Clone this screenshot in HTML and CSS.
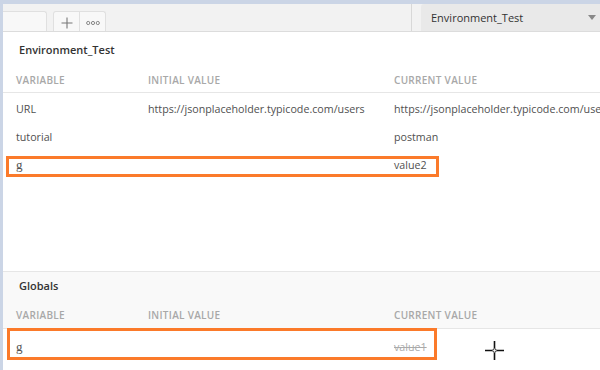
FILE: index.html
```html
<!DOCTYPE html>
<html>
<head>
<meta charset="UTF-8">
<title>Environment_Test</title>
<link rel="stylesheet" href="styles.css">
</head>
<body>
<div class="frame">
  <div class="top-strip"></div>
  <div class="toolbar">
    <div class="tab"></div>
    <div class="tab-actions">
      <span class="tab-btn">
        <svg width="12" height="12" viewBox="0 0 12 12"><path d="M6 0.5V11.5M0.5 6H11.5" stroke="#777" stroke-width="1.1" fill="none"/></svg>
      </span>
      <span class="tab-btn">
        <svg width="14" height="6" viewBox="0 0 14 6"><circle cx="2.2" cy="3" r="1.6" stroke="#888" fill="none"/><circle cx="7" cy="3" r="1.6" stroke="#888" fill="none"/><circle cx="11.8" cy="3" r="1.6" stroke="#888" fill="none"/></svg>
      </span>
    </div>
    <div class="toolbar-space"></div>
    <div class="env-select">
      <span>Environment_Test</span>
      <svg width="8" height="5" viewBox="0 0 8 5"><path d="M0 0H8L4 5Z" fill="#888"/></svg>
    </div>
  </div>

  <div class="panel">
    <div class="section">
      <div class="section-title">Environment_Test</div>
      <div class="var-row head">
        <span>Variable</span><span>Initial value</span><span>Current value</span>
      </div>
      <div class="var-row">
        <span>URL</span><span>https://jsonplaceholder.typicode.com/users</span><span>https://jsonplaceholder.typicode.com/users</span>
      </div>
      <div class="var-row">
        <span>tutorial</span><span></span><span>postman</span>
      </div>
      <div class="var-row">
        <span class="edit">g</span><span></span><span>value2</span>
      </div>
    </div>

    <div class="section globals">
      <div class="section-title">Globals</div>
      <div class="var-row head">
        <span>Variable</span><span>Initial value</span><span>Current value</span>
      </div>
      <div class="var-row first">
        <span class="edit">g</span><span></span><span class="old">value1</span>
      </div>
    </div>

    <div class="mark mark-env"></div>
    <div class="mark mark-global"></div>
    <svg class="cursor" width="21" height="21" viewBox="0 0 21 21">
      <path d="M10.5 1V8M10.5 13V20M1 10.5H8M13 10.5H20" stroke="#111" stroke-width="1.6"/>
      <circle cx="10.5" cy="10.5" r="1.8" stroke="#111" fill="#fff" stroke-width="1"/>
    </svg>
  </div>
</div>
</body>
</html>
```

FILE: styles.css
```css
body {
  margin: 0;
  font-family: "Open Sans", Arial, sans-serif;
  color: #505050;
  background-color: #fff;
}

.frame {
  width: 600px;
  height: 370px;
  overflow: hidden;
  border-left: 3px solid #cbd5e6;
  box-sizing: border-box;
  position: relative;
}

.top-strip {
  height: 4px;
  background-color: #cbd5e6;
}

.toolbar {
  display: flex;
  align-items: flex-end;
  height: 27px;
  background-color: #f2f2f2;
  border-bottom: 1px solid #dcdcdc;
}

.tab {
  width: 43px;
  height: 19px;
  background-color: #f8f8f8;
  border: 1px solid #e0e0e0;
  border-left: none;
  border-bottom: none;
  border-radius: 0 3px 0 0;
}

.tab-actions {
  display: flex;
  margin-left: 6px;
  height: 19px;
  border: 1px solid #e0e0e0;
  border-bottom: none;
  border-radius: 3px 3px 0 0;
  background-color: #f8f8f8;
}

.tab-btn {
  width: 25px;
  display: flex;
  align-items: center;
  justify-content: center;
  padding-top: 2px;
}

.tab-btn + .tab-btn {
  border-left: 1px solid #e0e0e0;
}

.toolbar-space {
  flex: 1;
  align-self: stretch;
  border-right: 1px solid #d8d8d8;
  margin-right: 9px;
}

.env-select {
  align-self: stretch;
  width: 165px;
  display: flex;
  align-items: center;
  justify-content: space-between;
  padding: 0 4px 0 10px;
  background-color: #e9e9e9;
  border-radius: 3px 0 0 0;
  font-size: 11px;
  color: #333;
}

.panel {
  position: relative;
}

.section {
  height: 239px;
}

.section.globals {
  height: auto;
  border-top: 1px solid #e6e6e6;
}

.section-title {
  padding: 10px 0 0 16px;
  height: 24px;
  font-size: 11px;
  font-weight: 600;
  color: #333;
}

.globals .section-title {
  background-color: #f9f9f9;
  height: 22px;
  padding-top: 6px;
}

.var-row {
  display: grid;
  grid-template-columns: 132px 246px 1fr;
  padding: 3px 0 0 13px;
  height: 25px;
  align-items: center;
  font-size: 10.7px;
  white-space: nowrap;
  color: #505050;
}

.var-row.head {
  height: 24px;
  padding-top: 2px;
  font-size: 10px;
  font-weight: 600;
  text-transform: uppercase;
  letter-spacing: 0.3px;
  color: #a8a8a8;
  border-bottom: 1px solid #e6e6e6;
}

.globals .var-row.head {
  height: 26px;
  background-color: #f9f9f9;
}

.globals .var-row.first {
  height: 32px;
  padding-top: 2px;
}

.edit {
  font-family: "Liberation Serif", serif;
  font-size: 13px;
}

.old {
  color: #aaa;
  text-decoration: line-through;
}

.mark {
  position: absolute;
  border: 3px solid #fb7a2a;
}

.mark-env {
  left: 3px;
  top: 124px;
  width: 427px;
  height: 15px;
}

.mark-global {
  left: 4px;
  top: 296px;
  width: 424px;
  height: 26px;
}

.cursor {
  position: absolute;
  left: 481px;
  top: 308px;
}
```
